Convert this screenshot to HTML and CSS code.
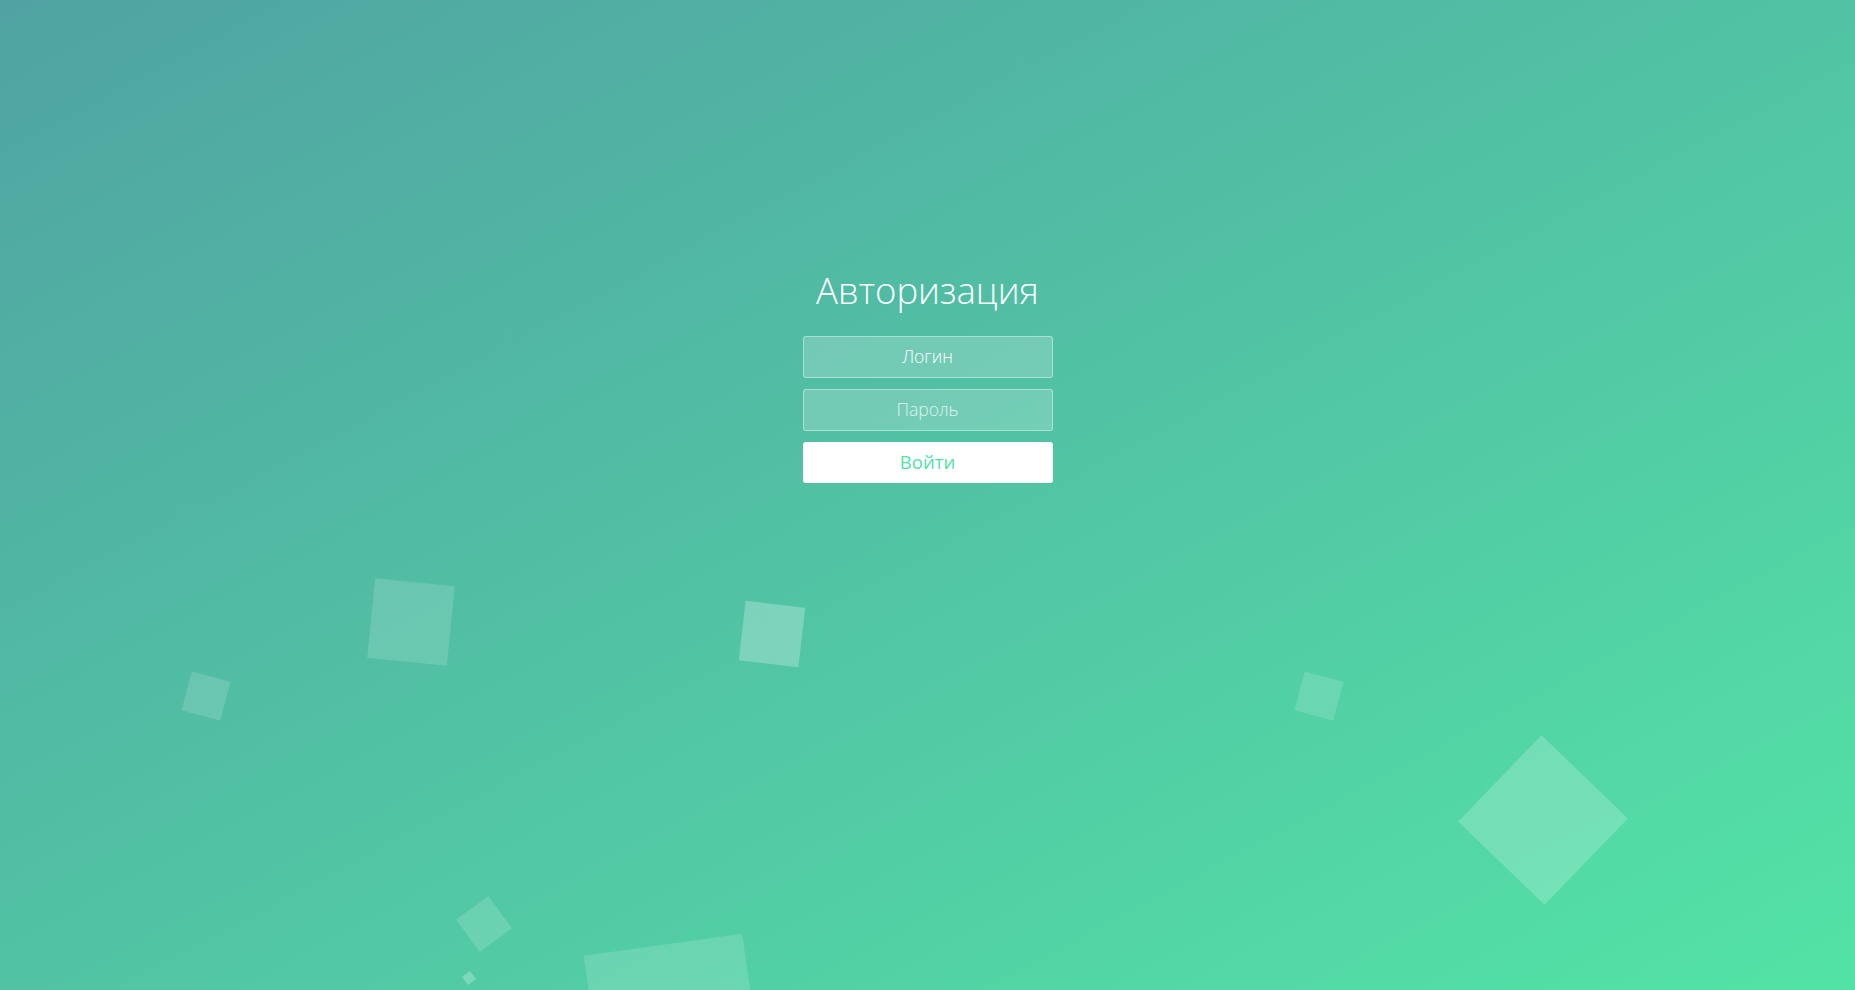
FILE: index.html
```html
<!DOCTYPE html>
<html lang="ru">
<head>
<meta charset="utf-8">
<title>Авторизация</title>
<link rel="stylesheet" href="styles.css">
</head>
<body>
<div class="scene">
  <div class="login">
    <h1 class="title">Авторизация</h1>
    <form class="form">
      <input class="field field-login" type="text" placeholder="Логин">
      <input class="field field-pass" type="password" placeholder="Пароль">
      <button class="submit" type="button">Войти</button>
    </form>
  </div>
  <ul class="bubbles">
    <li class="sq sq1"></li>
    <li class="sq sq2"></li>
    <li class="sq sq3"></li>
    <li class="sq sq4"></li>
    <li class="sq sq5"></li>
    <li class="sq sq6"></li>
    <li class="sq sq7"></li>
    <li class="sq sq8"></li>
  </ul>
</div>
</body>
</html>
```
FILE: styles.css
```css
* { box-sizing: border-box; }
html, body { margin: 0; padding: 0; height: 100%; }
body {
  font-family: "Open Sans", "Liberation Sans", sans-serif;
  font-weight: 300;
  color: #fff;
}
.scene {
  position: relative;
  width: 100%;
  height: 100vh;
  overflow: hidden;
  background: linear-gradient(to bottom right, #50a3a2 0%, #53e3a6 100%);
}
.login {
  position: relative;
  z-index: 2;
  display: flex;
  flex-direction: column;
  align-items: center;
  padding-top: 266px;
}
.title {
  margin: 0;
  font-size: 36.5px;
  line-height: 48px;
  font-weight: 300;
  color: #fff;
}
.form {
  margin-top: 22px;
  display: flex;
  flex-direction: column;
  align-items: center;
  gap: 11px;
}
.field {
  display: block;
  width: 250px;
  height: 42px;
  padding: 0 15px 3px;
  border: 1px solid rgba(255,255,255,0.4);
  background: rgba(255,255,255,0.2);
  border-radius: 3px;
  font-family: inherit;
  font-size: 17.5px;
  font-weight: 300;
  color: #fff;
  text-align: center;
  outline: none;
}
.field-login::placeholder { color: #fff; opacity: 1; }
.field-pass::placeholder { color: rgba(255,255,255,0.8); opacity: 1; }
.submit {
  display: block;
  width: 250px;
  height: 41px;
  margin-top: 0;
  border: 0;
  border-radius: 3px;
  background: #fff;
  color: #53e3a6;
  font-family: "Open Sans", "Liberation Sans", sans-serif;
  font-size: 18.5px;
  font-weight: 400;
  padding: 0 0 2px;
}
.bubbles {
  position: absolute;
  inset: 0;
  margin: 0;
  padding: 0;
  list-style: none;
  z-index: 1;
}
.sq {
  position: absolute;
  display: block;
  background: rgba(255,255,255,0.15);
}
.sq1 { left: 186px; top: 676px; width: 40px; height: 40px; transform: rotate(15deg); }
.sq2 { left: 371px; top: 582px; width: 80px; height: 80px; transform: rotate(5.7deg); }
.sq3 { left: 742px; top: 604px; width: 60px; height: 60px; transform: rotate(6.6deg); background: rgba(255,255,255,0.25); }
.sq4 { left: 464px; top: 904px; width: 40px; height: 40px; transform: rotate(54deg); }
.sq5 { left: 464px; top: 973px; width: 10px; height: 10px; transform: rotate(52deg); background: rgba(255,255,255,0.25); }
.sq6 { left: 594px; top: 944px; width: 160px; height: 160px; transform: rotate(-7.9deg); }
.sq7 { left: 1299px; top: 676px; width: 40px; height: 40px; transform: rotate(15deg); }
.sq8 { left: 1483px; top: 760px; width: 120px; height: 120px; transform: rotate(44deg); background: rgba(255,255,255,0.2); }
```
